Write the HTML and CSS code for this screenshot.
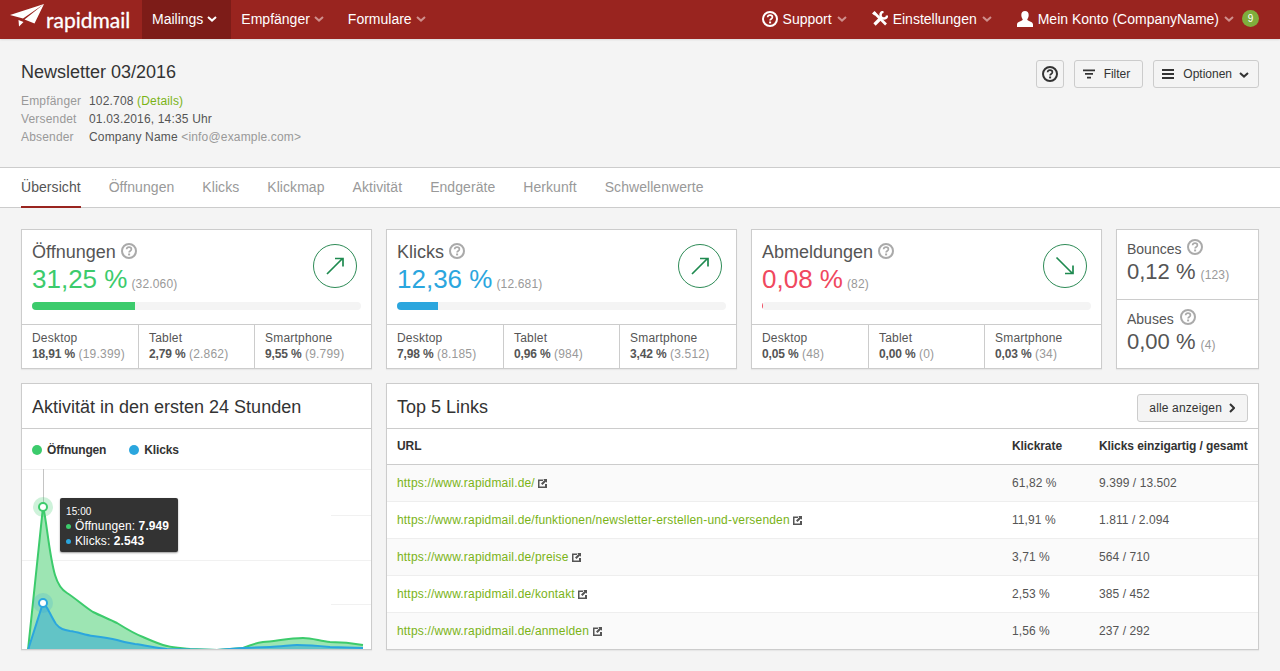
FILE: index.html
```html
<!DOCTYPE html>
<html lang="de">
<head>
    <meta charset="UTF-8">
    <title>rapidmail - Newsletter 03/2016</title>
    <link rel="stylesheet" href="styles.css">
</head>
<body>
    <!-- icons -->
    <svg class="sprite" width="0" height="0">
        <symbol id="i-caret" viewBox="0 0 10 6"><path d="M1 1l4 3.600L9 1" fill="none" stroke="currentColor" stroke-width="2"/></symbol>
        <symbol id="i-help" viewBox="0 0 16 16"><circle cx="8" cy="8" r="7" fill="none" stroke="currentColor" stroke-width="2"/><path d="M5.600 6.300C5.700 4.900 6.700 4.200 8 4.200c1.400 0 2.400.8 2.400 2 0 1.900-2.300 1.700-2.300 3.300" fill="none" stroke="currentColor" stroke-width="1.700"/><rect x="7.100" y="10.500" width="2" height="1.900" fill="currentColor"/></symbol>
        <symbol id="i-tools" viewBox="0 0 16 16"><g fill="none" stroke="currentColor"><path d="M2 1.500L14 13.500" stroke-width="2.600"/><path d="M2.500 13.500L10 6" stroke-width="3.200"/><path d="M11.500 .9A3.300 3.300 0 1 0 15.100 4.500" stroke-width="2.400"/></g><path d="M0 2.500L2.500 0l2 2.500L2.500 4.500z" fill="currentColor"/></symbol>
        <symbol id="i-user" viewBox="0 0 16 16"><path d="M8 0c2.300 0 3.700 1.700 3.700 3.900 0 2-1 3.500-1.500 4.700 0 1.400 5.800 2 5.800 4.900V16H0v-2.500c0-2.900 5.800-3.500 5.800-4.900C5.300 7.400 4.300 5.900 4.300 3.900 4.300 1.700 5.700 0 8 0z" fill="currentColor"/></symbol>
        <symbol id="i-ext" viewBox="0 0 9 9"><path d="M0 .5h5V2H1.500v5.500H7V5h2v4H0z" fill="currentColor"/><path d="M5.200 0H9v3.800L7.800 2.700 4.500 6 3 4.500l3.300-3.300z" fill="currentColor"/></symbol>
        <symbol id="i-up" viewBox="0 0 44 44"><circle cx="22" cy="22" r="21.500" fill="none" stroke="#2e8b57"/><path d="M14 30L29.500 14.500M22 14.500h8v8" stroke="#1f8a50" stroke-width="1.700" fill="none"/></symbol>
        <symbol id="i-down" viewBox="0 0 44 44"><circle cx="22" cy="22" r="21.500" fill="none" stroke="#2e8b57"/><path d="M13.500 13.500L29.500 29.500M22 29.500h8v-8" stroke="#1f8a50" stroke-width="1.700" fill="none"/></symbol>
    </svg>

    <!-- top navigation -->
    <nav class="topbar">
        <a class="logo">
            <svg class="logo-plane" viewBox="0 0 36 24" width="36" height="24"><path d="M35 0L1 11l13 3.500zM35 0L15.500 15.500 25.500 19.500zM9.500 16l.5 6.500 4.500-4.500z" fill="#fff"/></svg>
            <span class="logo-text">rapidmail</span>
        </a>
        <a class="nav-item active">Mailings <svg class="caret"><use href="#i-caret"/></svg></a>
        <a class="nav-item">Empfänger <svg class="caret"><use href="#i-caret"/></svg></a>
        <a class="nav-item">Formulare <svg class="caret"><use href="#i-caret"/></svg></a>
        <div class="nav-right">
            <a class="nav-item"><svg class="nav-icon"><use href="#i-help"/></svg>Support <svg class="caret"><use href="#i-caret"/></svg></a>
            <a class="nav-item"><svg class="nav-icon"><use href="#i-tools"/></svg>Einstellungen <svg class="caret"><use href="#i-caret"/></svg></a>
            <a class="nav-item account"><svg class="nav-icon"><use href="#i-user"/></svg>Mein Konto (CompanyName) <svg class="caret"><use href="#i-caret"/></svg></a>
            <span class="badge">9</span>
        </div>
    </nav>

    <!-- mailing head -->
    <header class="page-head">
        <div>
            <h1 class="page-title">Newsletter 03/2016</h1>
            <dl class="meta">
                <dt>Empfänger</dt><dd>102.708 <a class="link">(Details)</a></dd>
                <dt>Versendet</dt><dd>01.03.2016, 14:35 Uhr</dd>
                <dt>Absender</dt><dd>Company Name <span class="muted">&lt;info@example.com&gt;</span></dd>
            </dl>
        </div>
        <div class="head-actions">
            <button class="btn btn-icon"><svg class="btn-help"><use href="#i-help"/></svg></button>
            <button class="btn btn-filter">
                <svg class="btn-glyph" viewBox="0 0 12 9"><path d="M0 0h12v1.700H0zM2 3.600h8v1.700H2zM4 7.200h4v1.700H4z" fill="currentColor"/></svg>
                Filter
            </button>
            <button class="btn btn-options">
                <svg class="btn-glyph" viewBox="0 0 12 10"><path d="M0 0h12v2H0zM0 4h12v2H0zM0 8h12v2H0z" fill="currentColor"/></svg>
                Optionen
                <svg class="caret dark"><use href="#i-caret"/></svg>
            </button>
        </div>
    </header>

    <!-- tabs -->
    <div class="tabs">
        <a class="tab active">Übersicht</a>
        <a class="tab">Öffnungen</a>
        <a class="tab">Klicks</a>
        <a class="tab">Klickmap</a>
        <a class="tab">Aktivität</a>
        <a class="tab">Endgeräte</a>
        <a class="tab">Herkunft</a>
        <a class="tab">Schwellenwerte</a>
    </div>

    <main class="dashboard">
        <section class="card">
            <div class="card-top">
                <div>
                    <h3 class="card-title">Öffnungen <svg class="help"><use href="#i-help"/></svg></h3>
                    <p class="rate green">31,25 %<small>(32.060)</small></p>
                </div>
                <svg class="trend"><use href="#i-up"/></svg>
            </div>
            <div class="progress"><div class="progress-fill bg-green" style="width: 31.25%"></div></div>
            <div class="devices">
                <div class="device">Desktop<br><b>18,91 %</b> <span class="muted">(19.399)</span></div>
                <div class="device">Tablet<br><b>2,79 %</b> <span class="muted">(2.862)</span></div>
                <div class="device">Smartphone<br><b>9,55 %</b> <span class="muted">(9.799)</span></div>
            </div>
        </section>

        <section class="card">
            <div class="card-top">
                <div>
                    <h3 class="card-title">Klicks <svg class="help"><use href="#i-help"/></svg></h3>
                    <p class="rate blue">12,36 %<small>(12.681)</small></p>
                </div>
                <svg class="trend"><use href="#i-up"/></svg>
            </div>
            <div class="progress"><div class="progress-fill bg-blue" style="width: 12.36%"></div></div>
            <div class="devices">
                <div class="device">Desktop<br><b>7,98 %</b> <span class="muted">(8.185)</span></div>
                <div class="device">Tablet<br><b>0,96 %</b> <span class="muted">(984)</span></div>
                <div class="device">Smartphone<br><b>3,42 %</b> <span class="muted">(3.512)</span></div>
            </div>
        </section>

        <section class="card">
            <div class="card-top">
                <div>
                    <h3 class="card-title">Abmeldungen <svg class="help"><use href="#i-help"/></svg></h3>
                    <p class="rate red">0,08 %<small>(82)</small></p>
                </div>
                <svg class="trend"><use href="#i-down"/></svg>
            </div>
            <div class="progress"><div class="progress-fill bg-red" style="width: 0.3%"></div></div>
            <div class="devices">
                <div class="device">Desktop<br><b>0,05 %</b> <span class="muted">(48)</span></div>
                <div class="device">Tablet<br><b>0,00 %</b> <span class="muted">(0)</span></div>
                <div class="device">Smartphone<br><b>0,03 %</b> <span class="muted">(34)</span></div>
            </div>
        </section>

        <section class="card side">
            <div class="side-block">
                <h4 class="side-title">Bounces <svg class="help"><use href="#i-help"/></svg></h4>
                <p class="side-rate">0,12 %<small>(123)</small></p>
            </div>
            <div class="side-block">
                <h4 class="side-title">Abuses <svg class="help"><use href="#i-help"/></svg></h4>
                <p class="side-rate">0,00 %<small>(4)</small></p>
            </div>
        </section>

        <!-- activity chart -->
        <section class="card panel">
            <div class="panel-head"><h2 class="panel-title">Aktivität in den ersten 24 Stunden</h2></div>
            <div class="legend">
                <span class="legend-item"><i class="dot bg-green"></i>Öffnungen</span>
                <span class="legend-item"><i class="dot bg-blue"></i>Klicks</span>
            </div>
            <div class="chart">
                <svg class="chart-svg" viewBox="22 469 349 181" width="349" height="181">
                    <path d="M22 469.500H371M22 560.500H371M331 515.500H371M331 604.500H371" stroke="#f1f1f1" fill="none"/>
                    <path d="M43.500 469V650" stroke="#c4c4c4" fill="none"/>
                    <path d="M28 650L43 507C46 515 49 555 55 575C58 585 62 590 67 593C75 598 85 607 93 612C101 616 109 619 117 623C125 628 135 634 143 637C150 640 158 644 167 646C175 648 182 648 190 649L217 650L243 648C250 645 256 643 263 642C276 641 290 638 303 638C312 638 320 641 330 642C342 642 352 643 363 645V650Z" fill="#9de5b3"/>
                    <path d="M28 650L43 603C47 605 50 615 56 624C60 629 64 630 70 631C78 632 85 635 93 636C101 637 109 638 117 640C123 642 128 643 135 644C145 645 155 648 167 649L217 650L243 648L270 647C280 647 290 645 297 645C310 645 320 646 330 647L363 648V650Z" fill="#62c4c6"/>
                    <path d="M28 650L43 507C46 515 49 555 55 575C58 585 62 590 67 593C75 598 85 607 93 612C101 616 109 619 117 623C125 628 135 634 143 637C150 640 158 644 167 646C175 648 182 648 190 649L217 650L243 648C250 645 256 643 263 642C276 641 290 638 303 638C312 638 320 641 330 642C342 642 352 643 363 645" fill="none" stroke="#3ccb6c" stroke-width="2"/>
                    <path d="M28 650L43 603C47 605 50 615 56 624C60 629 64 630 70 631C78 632 85 635 93 636C101 637 109 638 117 640C123 642 128 643 135 644C145 645 155 648 167 649L217 650L243 648L270 647C280 647 290 645 297 645C310 645 320 646 330 647L363 648" fill="none" stroke="#2ba6de" stroke-width="2"/>
                    <circle cx="43" cy="507" r="10" fill="#3ccb6c" fill-opacity=".25"/>
                    <circle cx="43" cy="603" r="10" fill="#2ba6de" fill-opacity=".2"/>
                    <circle cx="43" cy="507" r="4" fill="#fff" stroke="#3ccb6c" stroke-width="2"/>
                    <circle cx="43" cy="603" r="4" fill="#fff" stroke="#2ba6de" stroke-width="2"/>
                </svg>
                <div class="chart-tip">
                    <div class="tip-time">15:00</div>
                    <div class="tip-row"><i class="tip-dot bg-green"></i>Öffnungen: <b>7.949</b></div>
                    <div class="tip-row"><i class="tip-dot bg-blue"></i>Klicks: <b>2.543</b></div>
                </div>
            </div>
        </section>

        <!-- top links -->
        <section class="card panel links">
            <div class="panel-head">
                <h2 class="panel-title">Top 5 Links</h2>
                <button class="btn btn-more">alle anzeigen <svg class="chev" viewBox="0 0 6 10"><path d="M1 1l4 4-4 4" fill="none" stroke="currentColor" stroke-width="2"/></svg></button>
            </div>
            <table class="links-table">
                <thead>
                    <tr><th class="col-url">URL</th><th class="col-rate">Klickrate</th><th>Klicks einzigartig / gesamt</th></tr>
                </thead>
                <tbody>
                    <tr><td><a class="link">https://www.rapidmail.de/</a> <svg class="ext"><use href="#i-ext"/></svg></td><td>61,82 %</td><td>9.399 / 13.502</td></tr>
                    <tr><td><a class="link">https://www.rapidmail.de/funktionen/newsletter-erstellen-und-versenden</a> <svg class="ext"><use href="#i-ext"/></svg></td><td>11,91 %</td><td>1.811 / 2.094</td></tr>
                    <tr><td><a class="link">https://www.rapidmail.de/preise</a> <svg class="ext"><use href="#i-ext"/></svg></td><td>3,71 %</td><td>564 / 710</td></tr>
                    <tr><td><a class="link">https://www.rapidmail.de/kontakt</a> <svg class="ext"><use href="#i-ext"/></svg></td><td>2,53 %</td><td>385 / 452</td></tr>
                    <tr><td><a class="link">https://www.rapidmail.de/anmelden</a> <svg class="ext"><use href="#i-ext"/></svg></td><td>1,56 %</td><td>237 / 292</td></tr>
                </tbody>
            </table>
        </section>
    </main>
</body>
</html>
```

FILE: styles.css
```css
* {
    margin: 0;
    padding: 0;
    box-sizing: border-box;
}

body {
    font-family: "Liberation Sans", Arial, sans-serif;
    font-size: 12px;
    line-height: 18px;
    background: #f4f4f4;
    color: #555;
}

.sprite {
    position: absolute;
}

.muted {
    color: #999;
}

.link {
    color: #7ab317;
}

.green { color: #3ccb6c; }
.blue { color: #2ba6de; }
.red { color: #f0485e; }
.bg-green { background: #3ccb6c; }
.bg-blue { background: #2ba6de; }
.bg-red { background: #f0485e; }

/* top navigation */
.topbar {
    display: flex;
    align-items: stretch;
    height: 39px;
    background: #99241f;
    color: #fff;
    font-size: 14px;
    box-shadow: 0 1px 2px rgba(0, 0, 0, 0.1);
}

.logo {
    display: flex;
    align-items: center;
    width: 142px;
    padding-left: 9px;
}

.logo-plane {
    flex: none;
    margin-top: -8px;
}

.logo-text {
    font-family: Lato, sans-serif;
    font-size: 21px;
    line-height: 1;
    margin-left: 1px;
    -webkit-text-stroke: 0.3px #fff;
}

.nav-item {
    display: flex;
    align-items: center;
    gap: 4px;
    padding: 0 14px 2px 10px;
    white-space: nowrap;
}

.nav-item.active {
    background: #7d1c18;
}

.caret {
    width: 10px;
    height: 6px;
    margin-top: 1px;
    color: #cf8f8c;
}

.active .caret {
    color: #fff;
}

.caret.dark {
    color: #333;
    margin-left: 7px;
}

.nav-right {
    display: flex;
    align-items: stretch;
    margin-left: auto;
    padding-right: 21px;
}

.nav-right .nav-item {
    padding-right: 15px;
}

.nav-right .caret {
    margin-left: 1px;
}

.nav-icon {
    width: 16px;
    height: 16px;
    margin-right: 1px;
}

.nav-right .account {
    padding-right: 8px;
}

.badge {
    align-self: center;
    width: 17px;
    height: 17px;
    margin-bottom: 2px;
    border-radius: 50%;
    background: #7fae3c;
    font-size: 10px;
    line-height: 17px;
    text-align: center;
}

/* mailing head */
.page-head {
    display: flex;
    justify-content: space-between;
    height: 129px;
    padding: 22px 21px 0;
    border-bottom: 1px solid #ccc;
}

.page-title {
    font-size: 18px;
    font-weight: 400;
    line-height: 22px;
    color: #333;
    margin-bottom: 9px;
}

.meta {
    display: grid;
    grid-template-columns: 68px auto;
    letter-spacing: 0.17px;
}

.meta dt {
    color: #999;
}

.head-actions {
    display: flex;
    gap: 10px;
    margin-top: -1px;
}

.btn {
    display: flex;
    align-items: center;
    height: 28px;
    padding: 0 10px;
    border: 1px solid #ccc;
    border-radius: 3px;
    background: #f4f4f4;
    color: #333;
    font: 12px "Liberation Sans", Arial, sans-serif;
}

.btn-icon {
    width: 28px;
    padding: 0;
    justify-content: center;
}

.btn-filter {
    padding: 0 12px 0 8px;
}

.btn-options {
    padding: 0 9px 0 8px;
}

.btn-help {
    width: 16px;
    height: 16px;
}

.btn-glyph {
    width: 12px;
    height: 10px;
    margin-right: 9px;
}

/* tabs */
.tabs {
    display: flex;
    gap: 28px;
    height: 40px;
    padding: 0 21px;
    background: #fff;
    border-bottom: 1px solid #ccc;
    letter-spacing: 0.06px;
}

.tab {
    font-size: 14px;
    line-height: 39px;
    height: 40px;
    color: #999;
}

.tab.active {
    color: #555;
    border-bottom: 2px solid #99241f;
}

/* dashboard */
.dashboard {
    display: grid;
    grid-template-columns: 351px 351px 351px 143px;
    column-gap: 14px;
    row-gap: 14px;
    padding: 21px;
}

.card {
    background: #fff;
    border: 1px solid #ccc;
    box-shadow: 0 1px 1px rgba(0, 0, 0, 0.05);
}

.card-top {
    display: flex;
    justify-content: space-between;
    height: 71px;
    padding: 11px 14px 0 10px;
}

.card-title {
    font-size: 18px;
    font-weight: 400;
    line-height: 22px;
}

.help {
    width: 16px;
    height: 16px;
    vertical-align: -1px;
    color: #aaa;
}

.rate {
    font-size: 26px;
    line-height: 32px;
}

.rate small,
.side-rate small {
    margin-left: 4px;
    font-size: 12px;
    letter-spacing: 0.17px;
    color: #999;
}

.side-rate small {
    margin-left: 5px;
}

.trend {
    width: 44px;
    height: 44px;
    margin-top: 3px;
}

.progress {
    height: 8px;
    margin: 1px 10px 14px;
    border-radius: 4px;
    background: #f4f4f4;
    overflow: hidden;
}

.progress-fill {
    height: 100%;
}

.devices {
    display: grid;
    grid-template-columns: 116px 116px 1fr;
    border-top: 1px solid #ccc;
    height: 44px;
}

.device {
    padding: 5px 10px;
    line-height: 16px;
    white-space: nowrap;
    letter-spacing: 0.2px;
}

.device b {
    letter-spacing: -0.15px;
}

.device + .device {
    border-left: 1px solid #ccc;
}

.side {
    display: grid;
    grid-template-rows: 69px auto;
}

.side-block {
    padding: 9px 10px 0;
}

.side-block + .side-block {
    border-top: 1px solid #ccc;
}

.side-title {
    font-size: 14px;
    font-weight: 400;
    line-height: 19px;
}

.side-title .help {
    margin-left: 2px;
}

.side-rate {
    font-size: 22px;
    line-height: 26px;
}

/* panels */
.panel {
    height: 267px;
    overflow: hidden;
}

.links {
    grid-column: span 3;
}

.panel-head {
    display: flex;
    justify-content: space-between;
    align-items: center;
    height: 45px;
    padding: 2px 10px 0;
    border-bottom: 1px solid #ccc;
}

.panel-title {
    font-size: 18px;
    font-weight: 400;
    color: #333;
}

.legend {
    display: flex;
    gap: 23px;
    height: 40px;
    padding: 12px 10px 0;
    font-weight: 700;
    letter-spacing: -0.15px;
    color: #333;
}

.legend-item {
    display: flex;
    align-items: center;
    height: 18px;
}

.dot {
    width: 10px;
    height: 10px;
    margin-right: 5px;
    border-radius: 50%;
}

.chart {
    position: relative;
}

.chart-svg {
    display: block;
}

.chart-tip {
    position: absolute;
    top: 29px;
    left: 38px;
    width: 118px;
    height: 54px;
    padding: 6px 6px 0;
    border-radius: 2px;
    background: #333;
    color: #fff;
    letter-spacing: 0.1px;
    box-shadow: 0 1px 2px rgba(0, 0, 0, 0.4);
}

.tip-time {
    font-size: 10px;
    line-height: 15px;
}

.tip-row {
    display: flex;
    align-items: center;
    line-height: 15px;
    white-space: pre;
}

.tip-dot {
    width: 5px;
    height: 5px;
    margin-right: 4px;
    border-radius: 50%;
}

.btn-more {
    gap: 7px;
    margin-top: 1px;
    padding: 0 12px 0 11px;
    letter-spacing: 0.15px;
}

.chev {
    width: 6px;
    height: 10px;
}

.links-table {
    width: 100%;
    border-collapse: collapse;
    table-layout: fixed;
}

.links-table th,
.links-table td {
    padding: 0 10px;
    text-align: left;
    white-space: nowrap;
}

.links-table th {
    height: 35px;
    color: #333;
    letter-spacing: -0.08px;
    border-bottom: 1px solid #ccc;
}

.links-table td {
    height: 37px;
    letter-spacing: 0.18px;
    border-bottom: 1px solid #eee;
}

.links-table td + td {
    letter-spacing: 0.08px;
}

.links-table tbody tr:last-child td {
    border-bottom: 0;
}

.links-table tbody tr:nth-child(odd) {
    background: #fafafa;
}

.col-url {
    width: 615px;
}

.col-rate {
    width: 87px;
}

.ext {
    width: 9px;
    height: 9px;
    color: #555;
    vertical-align: -1px;
}
```
